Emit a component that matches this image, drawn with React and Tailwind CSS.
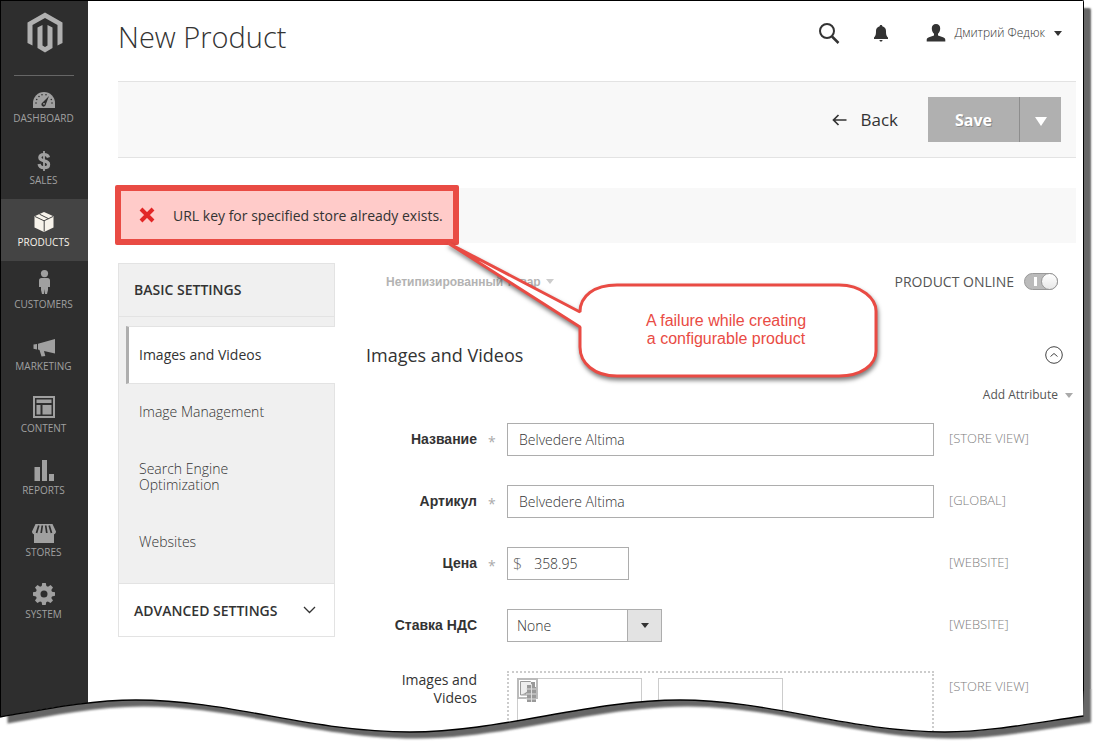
import { useState } from 'react';

const MENU_ITEMS = [
  { id: 'dashboard', label: 'Dashboard', icon: DashboardIcon },
  { id: 'sales', label: 'Sales', icon: SalesIcon },
  { id: 'products', label: 'Products', icon: ProductsIcon },
  { id: 'customers', label: 'Customers', icon: CustomersIcon },
  { id: 'marketing', label: 'Marketing', icon: MarketingIcon },
  { id: 'content', label: 'Content', icon: ContentIcon },
  { id: 'reports', label: 'Reports', icon: ReportsIcon },
  { id: 'stores', label: 'Stores', icon: StoresIcon },
  { id: 'system', label: 'System', icon: SystemIcon },
];

const SETTINGS_TABS = ['Images and Videos', 'Image Management', 'Search Engine Optimization', 'Websites'];

// One wave of the torn bottom edge, shared by the line and the shadow
const WAVE = 'M0 28 C46 20 90 11 136 11 C230 11 310 43 410 43 C500 43 590 11 680 11 C770 11 850 43 945 43 C990 43 1040 33 1083.5 27';

function MagentoLogo() {
  return (
    <svg width="36" height="41" viewBox="0 0 36 41" fill="#b0b0b0" aria-hidden="true">
      <path d="M18 0.5 35.5 10.500V31L30.500 33.500V13L18 6 5.500 13V33.500L0.500 31V10.500Z" />
      <path d="M10.500 15.500 15.500 13V33.500L18 35 20.500 33.500V13L25.500 15.500V36L18 40.500 10.500 36Z" />
    </svg>
  );
}

function DashboardIcon() {
  return (
    <svg width="24" height="27" viewBox="0 -4 24 27" aria-hidden="true">
      <path d="M1 20v-5a11 11 0 0 1 22 0v5Z" fill="currentColor" />
      <g fill="#2e2e2e">
        <circle cx="4" cy="15" r="0.8" />
        <circle cx="4.700" cy="11.500" r="0.8" />
        <circle cx="7" cy="8.500" r="0.8" />
        <circle cx="10" cy="6.800" r="0.8" />
        <circle cx="14" cy="6.800" r="0.8" />
        <circle cx="19.300" cy="11.500" r="0.8" />
        <circle cx="20" cy="15" r="0.8" />
        <path d="M17 8 13.800 16.500a2.200 2.200 0 1 1-3.300-2Z" />
      </g>
      <circle cx="12" cy="15.800" r="0.900" fill="currentColor" />
    </svg>
  );
}

function SalesIcon() {
  return (
    <svg width="24" height="27" viewBox="0 -3 24 27" fill="none" stroke="currentColor" aria-hidden="true">
      <path d="M16.500 8.500C16 6.500 14.500 5.500 12 5.500 9.500 5.500 7.800 6.500 7.800 8.600c0 4.600 8.800 2 8.800 6.800 0 2.200-2 3.300-4.600 3.300-2.800 0-4.600-1.200-4.900-3.700" strokeWidth="3.200" />
      <path d="M12 2v20" strokeWidth="1.800" />
    </svg>
  );
}

function ProductsIcon() {
  return (
    <svg width="24" height="27" viewBox="0 -2 24 27" aria-hidden="true">
      <path d="M12 2 21.500 6.200V17.500L12 22 2.500 17.500V6.200Z" fill="currentColor" />
      <path d="M3 6.500 12 10.800 21 6.500M12.200 11V21.500M7.500 4.200 16.500 8.700" fill="none" stroke="#444" strokeWidth="1" />
    </svg>
  );
}

function CustomersIcon() {
  return (
    <svg width="24" height="27" viewBox="0 0 24 27" fill="currentColor" aria-hidden="true">
      <circle cx="12.500" cy="3.600" r="3.600" />
      <path d="M9.500 8h6c1.700 0 2.500 1 2.500 2.700V17h-2v3l-1 4h-2l-.5-5-.5 5h-2l-1-4v-3H7v-6.300C7 9 7.800 8 9.500 8Z" />
    </svg>
  );
}

function MarketingIcon() {
  return (
    <svg width="24" height="27" viewBox="0 -3 24 27" fill="currentColor" aria-hidden="true">
      <path d="M1.500 9.500 5 9v5.500l-3.500-.8ZM6 8.800 23 4v14.500L12 16l1.300 5-3.800.5L7.500 15 6 14.600Z" />
    </svg>
  );
}

function ContentIcon() {
  return (
    <svg width="24" height="27" viewBox="0 -1 24 27" aria-hidden="true">
      <path d="M2 2h20v20H2Z" fill="none" stroke="currentColor" strokeWidth="2" />
      <path d="M4.500 4.500h15v3.500h-15ZM4.500 10h4v9.500h-4ZM10.500 10h9v9.500h-9Z" fill="currentColor" />
    </svg>
  );
}

function ReportsIcon() {
  return (
    <svg width="24" height="27" viewBox="0 -3 24 27" fill="currentColor" aria-hidden="true">
      <path d="M2.500 8H8v14H2.500ZM10 1h5v21h-5ZM17 15h5v7h-5Z" />
    </svg>
  );
}

function StoresIcon() {
  return (
    <svg width="24" height="27" viewBox="0 -3 24 27" aria-hidden="true">
      <path d="M3.500 3h17L24 10.500c0 1.500-.8 2.500-2 2.800V22H2v-8.700C.8 13 0 12 0 10.500Z" fill="currentColor" />
      <path d="M6.800 4.500 4.500 12M10.300 4.500 9.200 12M13.700 4.500 14.800 12M17.200 4.500 19.500 12" fill="none" stroke="#2e2e2e" strokeWidth="1.700" />
    </svg>
  );
}

function SystemIcon() {
  return (
    <svg width="24" height="27" viewBox="0 -2 24 27" aria-hidden="true">
      <path
        fillRule="evenodd"
        fill="currentColor"
        d="M10.200 1h3.600l.6 3 1.600.7L18.600 3 21 5.500l-1.700 2.600.7 1.600 3 .6v3.500l-3 .6-.7 1.600 1.700 2.600-2.500 2.500-2.600-1.700-1.600.7-.6 3h-3.500l-.6-3-1.600-.7-2.600 1.700L3 18.600 4.700 16 4 14.400l-3-.6v-3.500l3-.6.7-1.600L3 5.500 5.500 3l2.600 1.700L9.700 4ZM12 8.500a3.500 3.500 0 1 0 0 7 3.500 3.500 0 0 0 0-7Z"
      />
    </svg>
  );
}

function Caret({ className }) {
  return (
    <svg width="8" height="5" viewBox="0 0 8 5" fill="currentColor" className={className} aria-hidden="true">
      <path d="M0 0h8L4 5Z" />
    </svg>
  );
}

function Sidebar() {
  return (
    <aside className="w-[87px] shrink-0 bg-[#2e2e2e]">
      <a href="#" aria-label="Magento" className="flex h-[74px] justify-center pt-[11px]">
        <MagentoLogo />
      </a>
      <nav className="relative">
        <hr className="absolute right-[14px] left-[13px] top-0 border-[#666]" />
        {MENU_ITEMS.map(({ id, label, icon: Icon }) => (
          <a
            key={id}
            href="#"
            className={
              id === 'products'
                ? 'flex h-[62px] flex-col items-center bg-[#444] pt-[9px] pr-[2px] text-[#f7f3eb]'
                : 'flex h-[62px] flex-col items-center pt-[9px] pr-[2px] text-[#a0a0a0]'
            }
          >
            <Icon />
            <span className="text-[10px] leading-[14px] uppercase">{label}</span>
          </a>
        ))}
      </nav>
    </aside>
  );
}

function PageHeader() {
  return (
    <header className="flex h-20 justify-between">
      <h1 className="text-[29px] leading-[72px] font-light text-[#333]">New Product</h1>
      <div className="flex h-16 items-center pr-[14px] text-[#333]">
        <button type="button" aria-label="Search">
          <svg width="22" height="22" viewBox="0 0 22 22" fill="none" stroke="currentColor" aria-hidden="true">
            <circle cx="9" cy="9" r="7" strokeWidth="2" />
            <path d="M14 14.500 20.500 21" strokeWidth="2.500" />
          </svg>
        </button>
        <button type="button" aria-label="Notifications" className="ml-[33px]">
          <svg width="16" height="18" viewBox="0 0 16 18" fill="currentColor" aria-hidden="true">
            <path d="M8 1c.8 0 1.300.5 1.300 1.200C11.700 2.800 13 4.500 13 7c0 4 .6 5 2 6.500V15H1v-1.500C2.400 12 3 11 3 7c0-2.500 1.300-4.200 3.700-4.800C6.700 1.500 7.200 1 8 1ZM6.500 16h3c0 1-.7 1.500-1.500 1.500S6.500 17 6.500 16Z" />
          </svg>
        </button>
        <button type="button" className="ml-[37px] flex items-center">
          <svg width="20" height="18" viewBox="0 0 20 18" fill="currentColor" aria-hidden="true">
            <path d="M10 0c2.600 0 4.200 1.700 4.200 4.200 0 2.200-.9 4.400-2.200 5.500v1.800l5 1.800c1.500.5 2.300 1.300 2.300 2.700v1.500H.7V16c0-1.400.8-2.200 2.300-2.700l5-1.800V9.700C6.700 8.600 5.800 6.400 5.800 4.200 5.800 1.700 7.400 0 10 0Z" />
          </svg>
          <span className="ml-2 text-[12px] font-light">Дмитрий Федюк</span>
          <Caret className="ml-[9px]" />
        </button>
      </div>
    </header>
  );
}

function Toolbar() {
  return (
    <div className="flex h-[77px] items-center justify-end border-y border-[#e3e3e3] bg-[#f8f8f8] pr-[15px]">
      <button type="button" className="mr-[30px] flex items-center gap-[13px] text-[17px] leading-6 text-[#333]">
        <svg width="15" height="12" viewBox="0 0 15 12" fill="none" stroke="currentColor" strokeWidth="1.700" aria-hidden="true">
          <path d="M14.500 6H1.500M6.500 1 1.500 6l5 5" />
        </svg>
        Back
      </button>
      <button type="button" className="h-[45px] w-[91px] bg-[#b0b0b0] text-[16px] font-bold text-white [text-shadow:1px_1px_0_#888]">
        Save
      </button>
      <button type="button" aria-label="More save options" className="flex h-[45px] w-[42px] items-center justify-center border-l border-[#8d8d8d] bg-[#b0b0b0] pt-1 text-white">
        <svg width="12" height="9" viewBox="0 0 12 9" fill="currentColor" aria-hidden="true">
          <path d="M0 0h12L6 9Z" />
        </svg>
      </button>
    </div>
  );
}

function ErrorMessage() {
  return (
    <div className="relative mt-[30px] h-[55px] bg-[#f8f8f8]">
      <div role="alert" className="absolute -top-[3px] -left-[3px] flex h-[60px] w-[344px] items-center rounded-[2px] border-6 border-[#e94b44] bg-[#ffcbc9] pl-[18px] text-[14px] text-[#333]">
        <svg width="16" height="16" viewBox="0 0 16 16" stroke="#e22626" strokeWidth="4" aria-hidden="true">
          <path d="M2 2l12 12M14 2 2 14" />
        </svg>
        <span className="ml-[18px] whitespace-nowrap">URL key for specified store already exists.</span>
      </div>
    </div>
  );
}

function SettingsNav() {
  return (
    <nav className="w-[217px] shrink-0 self-start text-[14px] text-[#333]">
      <div className="border border-[#e3e3e3] bg-[#f0f0f0] pb-3">
        <h2 className="mb-[9px] border-b border-[#e3e3e3] pl-[15px] leading-[52px] font-semibold uppercase">
          Basic Settings
        </h2>
        {SETTINGS_TABS.map((tab, i) => (
          <a
            key={tab}
            href="#"
            className={
              i === 0
                ? 'relative -mr-px ml-[7px] block border-y border-l-3 border-y-[#e3e3e3] border-l-[#aeaeae] bg-white py-5 pl-[10px] leading-4'
                : '-mt-px ml-[10px] block border-y border-transparent py-5 pr-16 pl-[10px] leading-4 font-light'
            }
          >
            {tab}
          </a>
        ))}
      </div>
      <button type="button" className="-mt-px flex h-[54px] w-full items-center justify-between border border-[#e3e3e3] bg-white pr-[18px] pl-[15px] font-semibold uppercase">
        Advanced Settings
        <svg width="13" height="8" viewBox="0 0 13 8" fill="none" stroke="currentColor" strokeWidth="1.300" aria-hidden="true">
          <path d="M1 1l5.500 5.500L12 1" />
        </svg>
      </button>
    </nav>
  );
}

function Field({ id, label, required, scope, children }) {
  return (
    <div className="grid grid-cols-[141px_1fr_142px]">
      <div className="flex h-[33px] items-center justify-end pr-[11px]">
        <label htmlFor={id} className="font-['Liberation_Sans',sans-serif] text-[14px] font-bold">{label}</label>
        <span className="ml-[11px] w-2 pt-1 text-[14px] text-[#aaa]">{required ? '*' : ''}</span>
      </div>
      <div>{children}</div>
      <span className="pl-[15px] text-[13px] leading-[31px] font-light text-[#808080]">{scope}</span>
    </div>
  );
}

function BrokenImage() {
  return (
    <svg width="22" height="26" viewBox="0 0 22 26" className="-mt-px -ml-px" aria-hidden="true">
      <path d="M1 1h19v19H1Z" fill="#fff" stroke="#bbb" strokeWidth="2" />
      <path d="M3.500 3.500h10l3.500 3.500v10H3.500Z" fill="#eee" stroke="#999" />
      <path d="M4 16.500c5-1 8-4 9-8v8Z" fill="#999" />
      <path d="M10 7h4V4h4v5h1v15h-4v-2h-1v2h-4Z" fill="#999" />
      <path d="M9 11h10M9 16h10M9 21h10M14.500 6v18" stroke="#ddd" />
    </svg>
  );
}

function ProductForm() {
  const [online, setOnline] = useState(true);
  const inputClass = 'h-[33px] w-full border border-[#adadad] bg-white px-[11px] text-[14px] font-light text-[#333] outline-none';

  return (
    <form className="ml-[31px] min-w-0 flex-1 text-[#333]">
      <div className="flex h-[37px] items-center justify-between pr-[18px] pl-5">
        <button type="button" className="flex items-center gap-[5px] font-['Liberation_Sans',sans-serif] text-[12px] font-bold text-[#b3b3b3]">
          Нетипизированный товар
          <Caret className="text-[#ccc]" />
        </button>
        <label className="flex items-center gap-[10px] text-[14px] leading-5 text-[#555]">
          PRODUCT ONLINE
          <span className="relative flex h-[17px] w-[34px]">
            <input
              type="checkbox"
              checked={online}
              onChange={(e) => setOnline(e.target.checked)}
              className="peer h-full w-full appearance-none rounded-full border border-[#999] bg-[#bbb]"
            />
            <span className="pointer-events-none absolute top-1 left-[10px] h-[9px] w-[3px] bg-white" />
            <span className="pointer-events-none absolute top-0 left-0 h-[17px] w-[17px] rounded-full border border-[#999] bg-linear-to-b from-white to-[#e8e8e8] peer-checked:right-0 peer-checked:left-auto" />
          </span>
        </label>
      </div>

      <div className="mt-9 flex h-[38px] items-center justify-between pr-[13px]">
        <h2 className="text-[18px]">Images and Videos</h2>
        <button type="button" aria-label="Collapse section">
          <svg width="18" height="18" viewBox="0 0 18 18" fill="none" stroke="#444" aria-hidden="true">
            <circle cx="9" cy="9" r="8.300" />
            <path d="M5.500 10.500 9 7.500l3.500 3" />
          </svg>
        </button>
      </div>

      <div className="flex h-[42px] items-center justify-end pr-[3px]">
        <button type="button" className="flex items-center gap-[7px] text-[12px] text-[#555]">
          Add Attribute
          <Caret className="text-[#aaa]" />
        </button>
      </div>

      <div className="mt-[7px] flex flex-col gap-[29px]">
        <Field id="name" label="Название" scope="[STORE VIEW]" required>
          <input id="name" type="text" defaultValue="Belvedere Altima" className={inputClass} />
        </Field>
        <Field id="sku" label="Артикул" scope="[GLOBAL]" required>
          <input id="sku" type="text" defaultValue="Belvedere Altima" className={inputClass} />
        </Field>
        <Field id="price" label="Цена" scope="[WEBSITE]" required>
          <div className="flex h-[33px] w-[122px] items-center border border-[#adadad] bg-white">
            <span className="pl-[5px] text-[16px] font-light text-[#666]">$</span>
            <input id="price" type="text" defaultValue="358.95" className="ml-3 w-20 text-[14px] font-light outline-none" />
          </div>
        </Field>
        <Field id="tax" label="Ставка НДС" scope="[WEBSITE]">
          <div className="relative w-[155px]">
            <select id="tax" className="h-[33px] w-full appearance-none border border-[#adadad] bg-white pl-[9px] text-[14px] font-light">
              <option>None</option>
              <option>Taxable Goods</option>
            </select>
            <span className="pointer-events-none absolute top-0 right-0 flex h-[33px] w-[35px] items-center justify-center border border-[#adadad] bg-[#e3e3e3]">
              <Caret />
            </span>
          </div>
        </Field>
        <div className="grid grid-cols-[141px_1fr_142px]">
          <span className="pr-[30px] pl-5 text-right text-[14px] leading-[18px]">Images and Videos</span>
          <div className="flex h-[72px] gap-4 border-2 border-dotted border-[#ccc] px-2 pt-[5px]">
            <div className="w-[125px] border border-[#ccc]">
              <BrokenImage />
            </div>
            <div className="w-[125px] border border-[#ccc]" />
          </div>
          <span className="pl-[15px] text-[13px] leading-[31px] font-light text-[#808080]">[STORE VIEW]</span>
        </div>
      </div>
    </form>
  );
}

function Callout() {
  return (
    <div className="pointer-events-none absolute top-[238px] left-[440px] h-[150px] w-[446px]">
      <svg width="446" height="150" viewBox="0 0 446 150" className="absolute inset-0 drop-shadow-[1px_3px_2px_rgba(0,0,0,0.5)]" aria-hidden="true">
        <path
          d="M7 4 139 73C139 57 153 46 176 46H398C421 46 435 60 435 72V112C435 126 420 137 398 137H176C153 137 139 124 139 108V88Z"
          fill="#fff"
          stroke="#e94b44"
          strokeWidth="3"
          strokeLinejoin="bevel"
        />
      </svg>
      <p className="relative ml-[138px] w-[294px] pt-[73px] text-center font-['Liberation_Sans',sans-serif] text-[16px] leading-[18px] text-[#e94b44]">
        A failure while creating
        <br />
        a configurable product
      </p>
    </div>
  );
}

function TornEdge() {
  return (
    <svg
      viewBox="0 0 1099 60"
      preserveAspectRatio="none"
      className="pointer-events-none absolute inset-x-0 bottom-0 h-[60px] w-full"
      aria-hidden="true"
    >
      <defs>
        <clipPath id="outside">
          <path d={`${WAVE} L1084 0H1099V60H0Z`} />
        </clipPath>
        <filter id="soft" x="-5%" y="-50%" width="110%" height="200%">
          <feGaussianBlur stdDeviation="1" />
        </filter>
      </defs>
      <g clipPath="url(#outside)">
        <path d="M0 0H1099V60H0Z" fill="#fff" />
        <path d={`${WAVE} V-60H0Z`} fill="#666" filter="url(#soft)" transform="translate(7.500 6.500)" />
      </g>
      <path d={WAVE} fill="none" stroke="#000" strokeWidth="1.300" />
    </svg>
  );
}

export default function App() {
  return (
    <div className="relative flex min-h-screen overflow-hidden bg-white pr-[15px] font-['Open_Sans',sans-serif]">
      <div className="relative flex min-w-0 flex-1 rounded-tr-[2px] border-t border-r border-l border-black shadow-[7px_8px_2px_#666]">
        <Sidebar />
        <main className="min-w-0 flex-1 bg-white pr-[7px] pl-[30px]">
          <PageHeader />
          <Toolbar />
          <ErrorMessage />
          <div className="mt-5 flex">
            <SettingsNav />
            <ProductForm />
          </div>
        </main>
        <Callout />
      </div>
      <TornEdge />
    </div>
  );
}
